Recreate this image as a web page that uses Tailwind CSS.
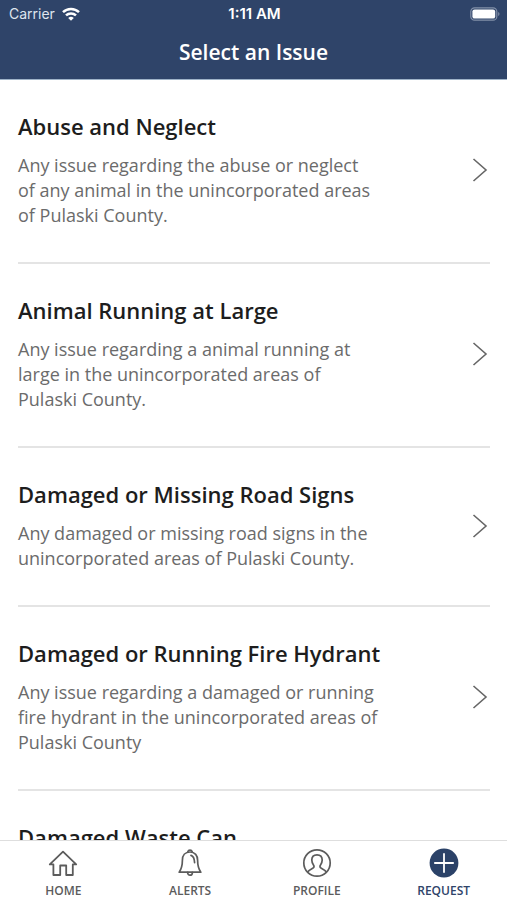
<!DOCTYPE html>
<html lang="en">
<head>
  <meta charset="UTF-8" />
  <meta name="viewport" content="width=device-width, initial-scale=1" />
  <title>Select an Issue</title>
  <script src="https://cdn.jsdelivr.net/npm/@tailwindcss/browser@4"></script>
</head>
<body class="bg-white h-screen flex flex-col overflow-hidden font-['Open_Sans',sans-serif]">

  <header class="bg-[#2f4469] text-white border-b border-[#9fb3c8] shrink-0">
    <!-- Status bar -->
    <div class="grid grid-cols-3 items-center h-7 pl-[9px] pr-[7px] font-[Inter,sans-serif] text-sm">
      <div class="flex items-center gap-[7px] text-[#dfe5ee]">
        <span>Carrier</span>
        <svg class="w-[18px] h-[14px]" viewBox="0 0 18 14" fill="none" stroke="#fff" stroke-width="2.5">
          <path d="M1 5.2a11.4 11.4 0 0 1 16 0" />
          <path d="M4 8.4a7.2 7.2 0 0 1 10 0" />
          <path d="M9 13.8L6.2 11a4 4 0 0 1 5.6 0z" fill="#fff" stroke="none" />
        </svg>
      </div>
      <div class="text-center text-[15px] font-semibold">1:11 AM</div>
      <svg class="w-[30px] h-[14px] justify-self-end" viewBox="0 0 30 14">
        <rect x="0.8" y="0.8" width="26" height="12.4" rx="3.8" fill="none" stroke="#8290a8" stroke-width="1.2" />
        <rect x="2.4" y="2.4" width="22.8" height="9.2" rx="2.2" fill="#fff" />
        <path d="M28.2 5v4a2.2 2.2 0 0 0 0-4z" fill="#8290a8" />
      </svg>
    </div>
    <h1 class="h-[51px] pt-2.5 text-center text-[21px] leading-7 font-semibold">Select an Issue</h1>
  </header>

  <!-- Issue list -->
  <main class="flex-1 min-h-0 overflow-hidden pl-[18px] pr-[17px]">
    <a href="#" class="flex items-center justify-between pt-8 pb-[34px] border-b-2 border-[#e4e4e4]">
      <div>
        <h2 class="text-[22px] leading-7 font-semibold text-[#1d1d1d]">Abuse and Neglect</h2>
        <p class="mt-[13px] text-lg leading-[25px] text-[#6b6b6b]">Any issue regarding the abuse or neglect<br />of any animal in the unincorporated areas<br />of Pulaski County.</p>
      </div>
      <svg class="w-4 h-6 mr-0.5 shrink-0" viewBox="0 0 16 24" fill="none" stroke="#666" stroke-width="1.6"><path d="M1.500 1l12.500 11L1.500 23" /></svg>
    </a>
    <a href="#" class="flex items-center justify-between pt-8 pb-[34px] border-b-2 border-[#e4e4e4]">
      <div>
        <h2 class="text-[22px] leading-7 font-semibold text-[#1d1d1d]">Animal Running at Large</h2>
        <p class="mt-[13px] text-lg leading-[25px] text-[#6b6b6b]">Any issue regarding a animal running at<br />large in the unincorporated areas of<br />Pulaski County.</p>
      </div>
      <svg class="w-4 h-6 mr-0.5 shrink-0" viewBox="0 0 16 24" fill="none" stroke="#666" stroke-width="1.6"><path d="M1.500 1l12.500 11L1.500 23" /></svg>
    </a>
    <a href="#" class="flex items-center justify-between pt-8 pb-[34px] border-b-2 border-[#e4e4e4]">
      <div>
        <h2 class="text-[22px] leading-7 font-semibold text-[#1d1d1d]">Damaged or Missing Road Signs</h2>
        <p class="mt-[13px] text-lg leading-[25px] text-[#6b6b6b]">Any damaged or missing road signs in the<br />unincorporated areas of Pulaski County.</p>
      </div>
      <svg class="w-4 h-6 mr-0.5 shrink-0" viewBox="0 0 16 24" fill="none" stroke="#666" stroke-width="1.6"><path d="M1.500 1l12.500 11L1.500 23" /></svg>
    </a>
    <a href="#" class="flex items-center justify-between pt-8 pb-[34px] border-b-2 border-[#e4e4e4]">
      <div>
        <h2 class="text-[22px] leading-7 font-semibold text-[#1d1d1d]">Damaged or Running Fire Hydrant</h2>
        <p class="mt-[13px] text-lg leading-[25px] text-[#6b6b6b]">Any issue regarding a damaged or running<br />fire hydrant in the unincorporated areas of<br />Pulaski County</p>
      </div>
      <svg class="w-4 h-6 mr-0.5 shrink-0" viewBox="0 0 16 24" fill="none" stroke="#666" stroke-width="1.6"><path d="M1.500 1l12.500 11L1.500 23" /></svg>
    </a>
    <a href="#" class="block pt-8">
      <h2 class="text-[22px] leading-7 font-semibold text-[#1d1d1d]">Damaged Waste Can</h2>
    </a>
  </main>

  <!-- Tab bar -->
  <nav class="grid grid-cols-4 h-[60px] shrink-0 bg-white border-t border-[#dedede] text-xs leading-4 font-semibold text-[#5c5c5c]">
    <a href="#" class="flex flex-col items-center pt-[7px] gap-[5px]">
      <svg class="w-[30px] h-[30px]" viewBox="0 0 30 30" fill="none" stroke="#5c5c5c" stroke-width="1.8">
        <path d="M1.800 16.400L15 3.600l13.200 12.800h-3.400V27H18.200v-9.500h-6V27H5.400V16.400z" stroke-linejoin="round" />
      </svg>
      HOME
    </a>
    <a href="#" class="flex flex-col items-center pt-[7px] gap-[5px]">
      <svg class="w-[30px] h-[30px]" viewBox="0 0 30 30" fill="none" stroke="#5c5c5c" stroke-width="1.7" stroke-linejoin="round" stroke-linecap="round">
        <path d="M12.800 3.800a2.300 2.300 0 0 1 4.400 0" />
        <path d="M15 4c-5 0-7.600 3.600-7.600 8.200 0 5.800-.8 8.400-3.200 12h21.600c-2.400-3.600-3.200-6.200-3.200-12C22.600 7.600 20 4 15 4z" />
        <path d="M12.600 24.400a2.400 2.800 0 0 0 4.800 0" />
        <path d="M16 7.400c2.600.8 3.400 3 3.600 7.200" />
      </svg>
      ALERTS
    </a>
    <a href="#" class="flex flex-col items-center pt-[7px] gap-[5px]">
      <svg class="w-[30px] h-[30px]" viewBox="0 0 30 30" fill="none" stroke="#5c5c5c" stroke-width="1.7" stroke-linejoin="round">
        <circle cx="15" cy="15" r="13.200" />
        <path d="M5.600 24.200c1-2 3-2.900 5.400-4.200 1.200-.7 1.300-1.700.6-2.800-1.200-1.600-1.800-3-1.800-5.200 0-3.300 2-5.200 5.200-5.200s5.200 1.900 5.200 5.200c0 2.200-.6 3.600-1.800 5.200-.7 1.100-.6 2.100.6 2.800 2.400 1.300 4.400 2.200 5.400 4.200" />
      </svg>
      PROFILE
    </a>
    <a href="#" class="flex flex-col items-center pt-[7px] gap-[5px] text-[#2f4469]">
      <svg class="w-[30px] h-[30px]" viewBox="0 0 30 30">
        <circle cx="15" cy="15" r="14.400" fill="#2b4268" />
        <path d="M15 5.200v19.600M5.200 15h19.600" fill="none" stroke="#fff" stroke-width="1.800" />
      </svg>
      REQUEST
    </a>
  </nav>

</body>
</html>
